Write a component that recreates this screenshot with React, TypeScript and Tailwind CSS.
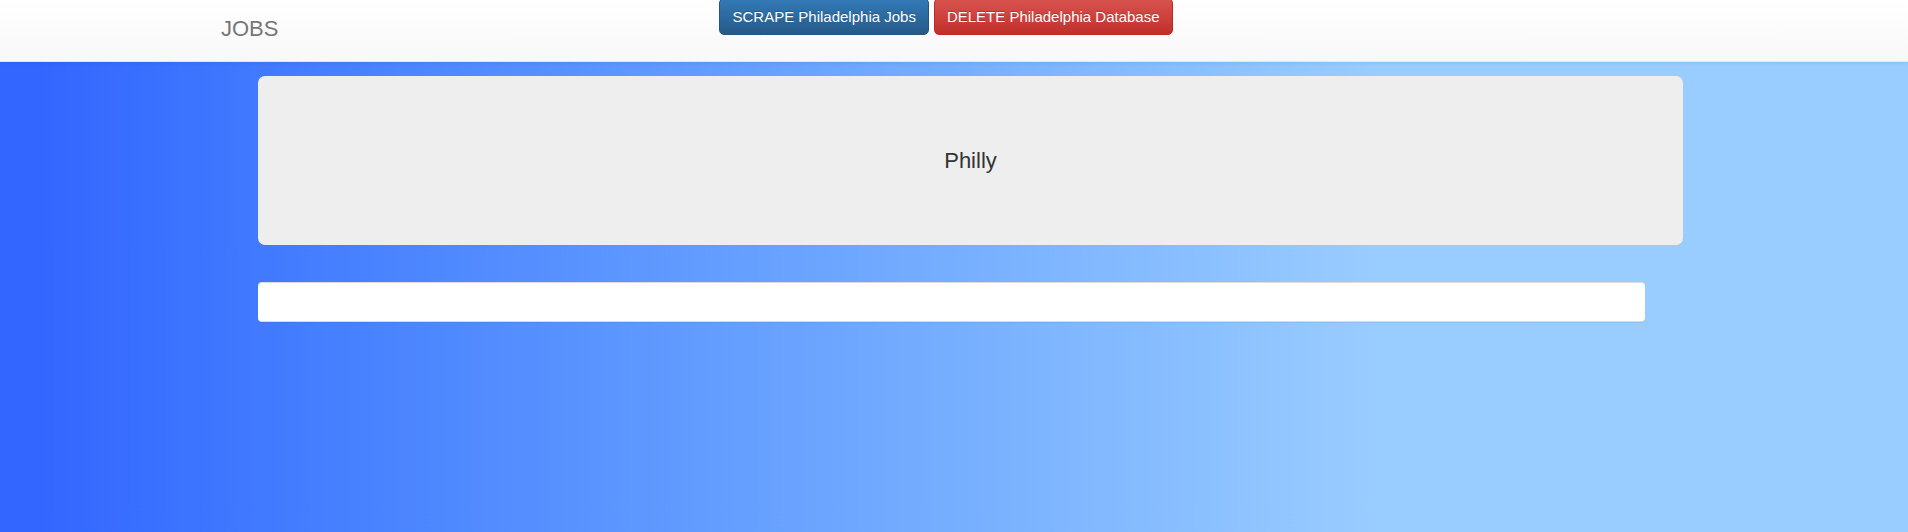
import React from 'react';

const App: React.FC = () => {
  const font = "font-['Liberation_Sans',_Arial,_sans-serif]";

  return (
    <div className={`min-h-[532px] w-full overflow-hidden bg-linear-to-r from-[#3366ff] from-[2%] to-[#99ccff] to-[72%] ${font}`}>
      {/* navbar */}
      <nav className="flex h-[62px] items-start border-b border-[#e7e7e7] bg-linear-to-b from-white to-[#f8f8f8] shadow-[0_1px_5px_rgba(0,0,0,0.075)]">
        <a className="ml-[221px] mt-[18px] text-[22px] leading-[22px] text-[#777]">JOBS</a>
        <div className="-mt-[2px] ml-[441px] flex gap-[5px]">
          <button className="flex h-[37px] items-center rounded-[5px] border border-[#245580] bg-linear-to-b from-[#337ab7] to-[#265a88] px-[12px] text-[15px] leading-[21px] text-white [text-shadow:0_-1px_0_rgba(0,0,0,0.2)]">
            SCRAPE Philadelphia Jobs
          </button>
          <button className="flex h-[37px] items-center rounded-[5px] border border-[#b92c28] bg-linear-to-b from-[#d9534f] to-[#c12e2a] px-[12px] text-[15px] leading-[21px] text-white [text-shadow:0_-1px_0_rgba(0,0,0,0.2)]">
            DELETE Philadelphia Database
          </button>
        </div>
      </nav>

      {/* content */}
      <main className="flex flex-col pl-[258px] pt-[14px]">
        <div className="flex h-[169px] w-[1425px] items-center justify-center rounded-[7px] bg-[#eeeeee]">
          <p className="text-[22px] leading-[30px] text-[#333]">Philly</p>
        </div>
        <div className="mt-[37px] h-[40px] w-[1387px] rounded-[4px] border-y border-[#dcdcdc] bg-white shadow-[0_1px_1px_rgba(0,0,0,0.05)]"></div>
      </main>
    </div>
  );
};

export default App;
